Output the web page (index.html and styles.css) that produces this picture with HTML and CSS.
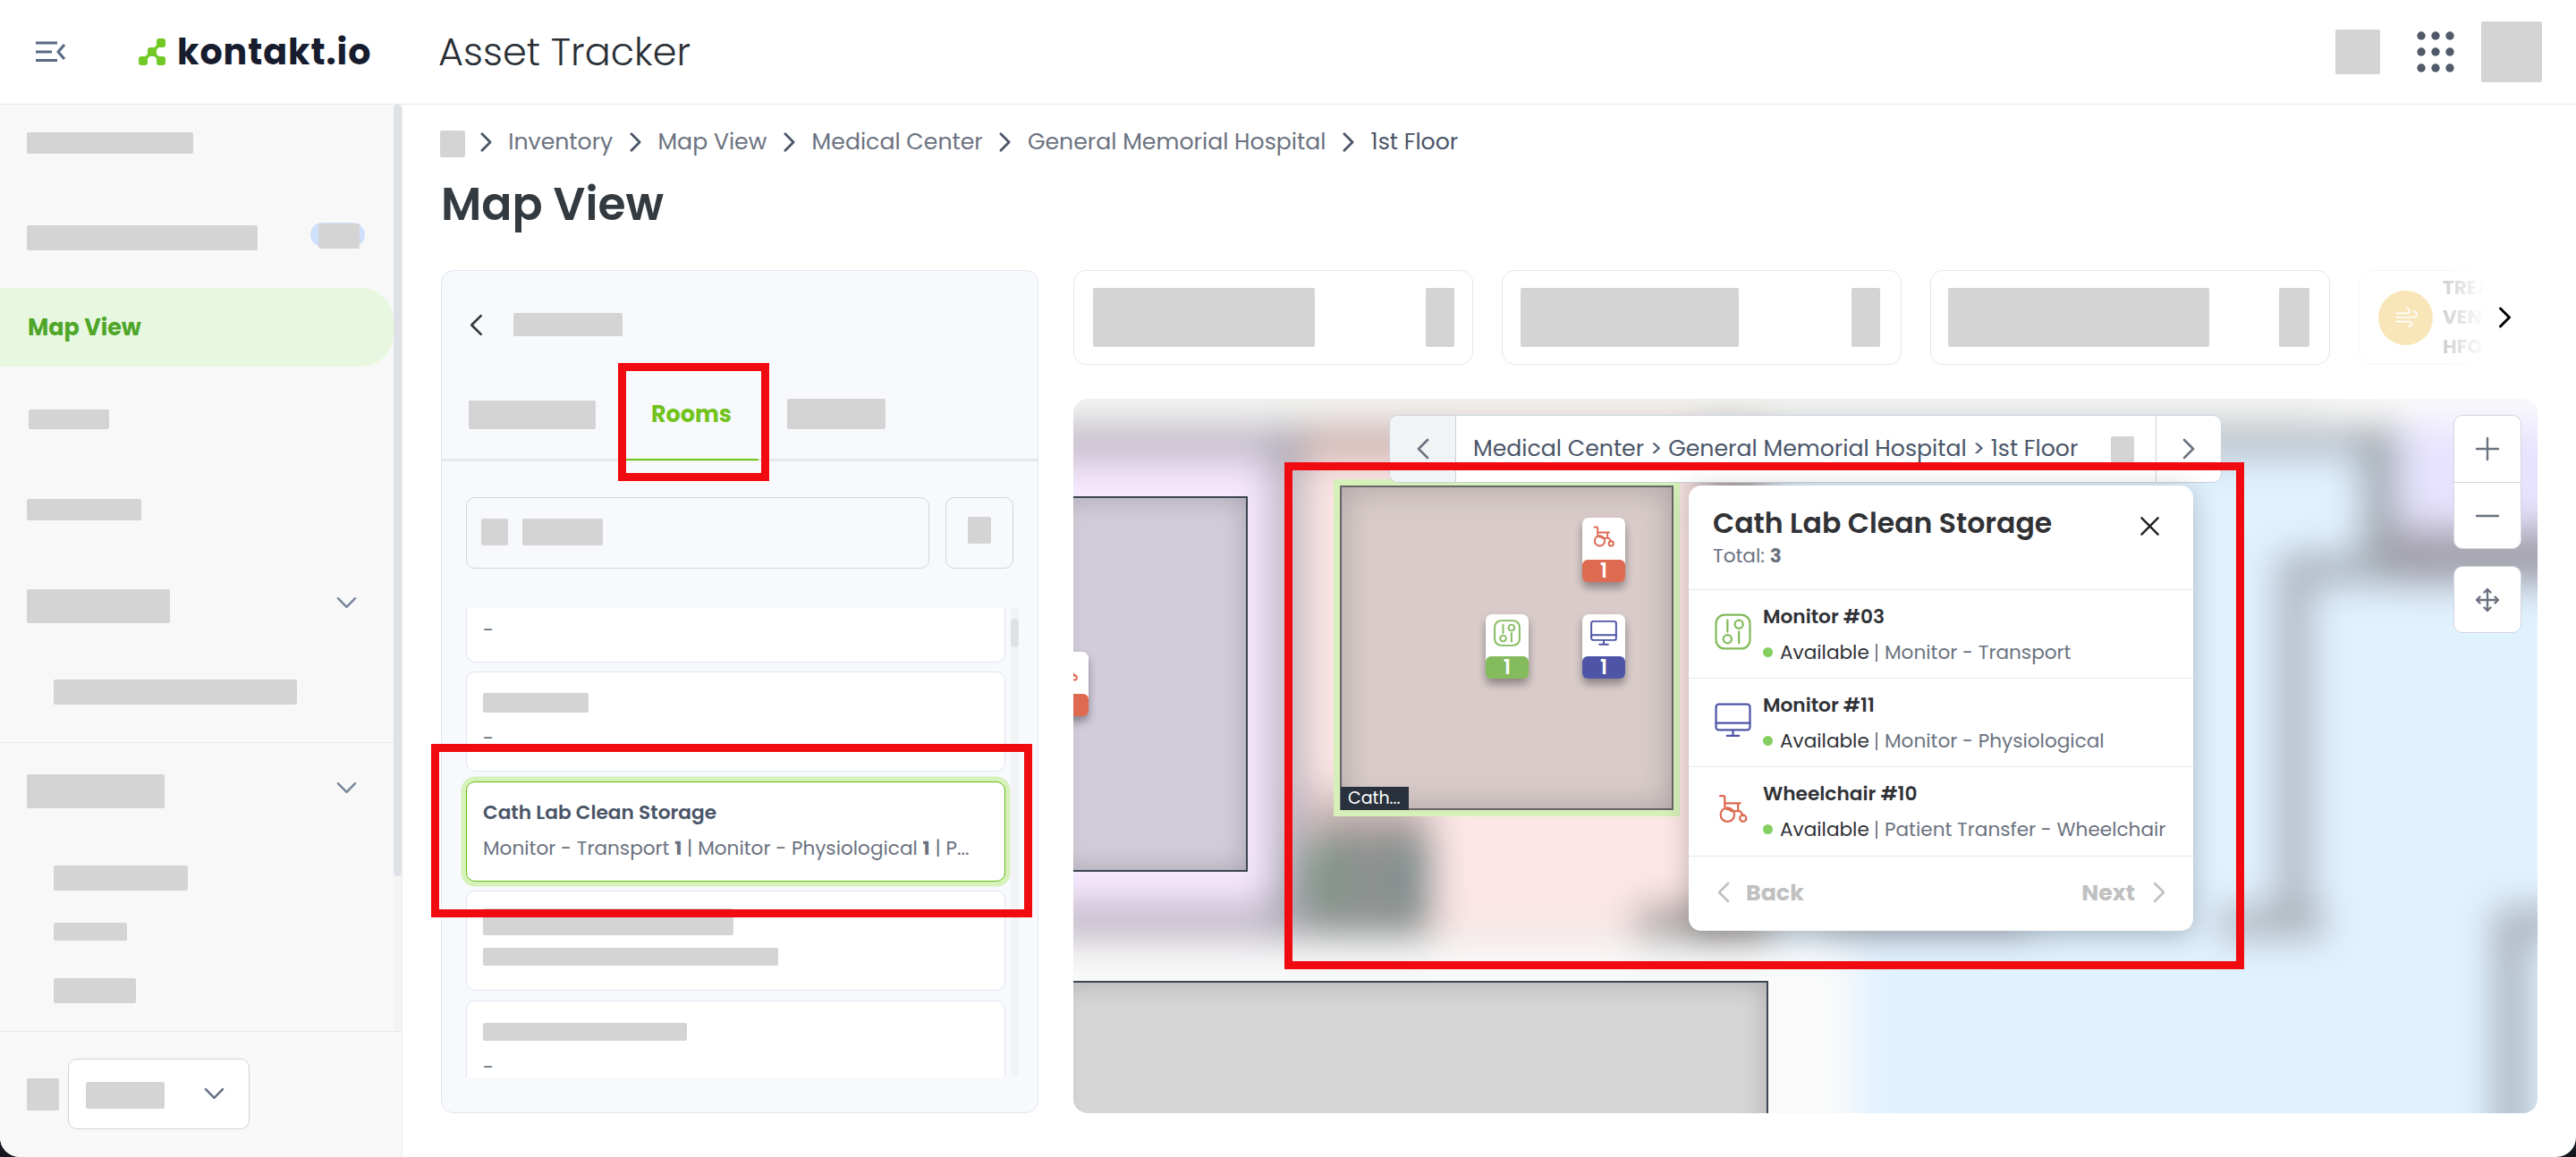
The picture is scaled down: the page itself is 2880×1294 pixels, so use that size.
FILE: index.html
```html
<!DOCTYPE html>
<html lang="en">
<head>
<meta charset="utf-8">
<title>Asset Tracker – Map View</title>
<link rel="stylesheet" href="styles.css">
</head>
<body>
<svg class="defs" width="0" height="0">
  <symbol id="chev-r" viewBox="0 0 14 24"><path d="M2 2l10 10L2 22"/></symbol>
  <symbol id="chev-l" viewBox="0 0 14 24"><path d="M12 2L2 12l10 10"/></symbol>
  <symbol id="chev-d" viewBox="0 0 24 14"><path d="M2 2l10 10L22 2"/></symbol>
  <symbol id="transport" viewBox="0 0 40 40"><rect x="1.5" y="1.5" width="37" height="37" rx="9.5"/><path d="M14 7.500V20M26.500 20v12.500"/><circle cx="26.500" cy="12" r="4.500"/><circle cx="14" cy="28" r="4.500"/></symbol>
  <symbol id="monitor" viewBox="0 0 40 40"><rect x="1.500" y="2.500" width="37" height="28" rx="3"/><path d="M1.500 23h37M20 30.500v6M13.500 37h13"/></symbol>
  <symbol id="wheelchair" viewBox="0 0 40 40"><path d="M6 6h3.500q1.500 0 1.500 2v10M11 14h17M25.500 14v8.500M13 20.500q2-1 5 2h9.500l4 5"/><circle cx="14" cy="26.500" r="7.500"/><circle cx="31" cy="30.500" r="3.500"/></symbol>
</svg>
<div class="app">
  <header class="header">
    <svg class="menu" viewBox="0 0 36 26"><path d="M1 3h24M1 13h18M1 22.500h24M33 5l-7 8 7 8"/></svg>
    <svg class="logo" viewBox="0 0 30 30"><path class="link" d="M24 6l-9 9M15 15l-10 10M15 15l10 10"/><rect x="20" y="0" width="10" height="10" rx="3"/><rect x="10" y="10" width="10" height="10" rx="3"/><rect x="0" y="20" width="10" height="10" rx="3"/><rect x="20" y="20" width="10" height="10" rx="3"/></svg>
    <span class="brand">kontakt.io</span>
    <span class="product">Asset Tracker</span>
    <div class="header-right">
      <i class="ph ph-tool"></i>
      <svg class="apps" viewBox="0 0 44 46"><circle cx="6" cy="5" r="4.700"/><circle cx="22" cy="5" r="4.700"/><circle cx="38" cy="5" r="4.700"/><circle cx="6" cy="23" r="4.700"/><circle cx="22" cy="23" r="4.700"/><circle cx="38" cy="23" r="4.700"/><circle cx="6" cy="41" r="4.700"/><circle cx="22" cy="41" r="4.700"/><circle cx="38" cy="41" r="4.700"/></svg>
      <i class="ph ph-user"></i>
    </div>
  </header>
  <div class="body">
    <aside class="sidebar">
      <div class="side-scroll">
        <nav class="nav">
          <div class="item"><i class="ph n1"></i></div>
          <div class="item"><i class="ph n2"></i><span class="pill"><i class="ph n2b"></i></span></div>
          <div class="item active"><span>Map View</span></div>
          <div class="item"><i class="ph n4"></i></div>
          <div class="item"><i class="ph n5"></i></div>
          <div class="item group"><i class="ph n6"></i><svg class="down"><use href="#chev-d"/></svg></div>
          <div class="sub s1"><i class="ph"></i></div>
          <div class="rule"></div>
          <div class="item group"><i class="ph n7"></i><svg class="down"><use href="#chev-d"/></svg></div>
          <div class="sub s2"><i class="ph"></i></div>
          <div class="sub s3"><i class="ph"></i></div>
          <div class="sub s4"><i class="ph"></i></div>
        </nav>
        <div class="side-track"><div class="side-thumb"></div></div>
      </div>
      <div class="side-foot"><i class="ph f1"></i><div class="select"><i class="ph f2"></i><svg class="down"><use href="#chev-d"/></svg></div></div>
    </aside>
    <main class="main">
      <div class="crumbs">
        <i class="ph home"></i><svg><use href="#chev-r"/></svg><span>Inventory</span><svg><use href="#chev-r"/></svg><span>Map View</span><svg><use href="#chev-r"/></svg><span>Medical Center</span><svg><use href="#chev-r"/></svg><span>General Memorial Hospital</span><svg><use href="#chev-r"/></svg><span class="current">1st Floor</span>
      </div>
      <h1 class="title">Map View</h1>
      <div class="content">
        <section class="panel">
          <div class="panel-head"><svg><use href="#chev-l"/></svg><i class="ph"></i></div>
          <div class="tabs"><i class="ph t1"></i><div class="tab"><span>Rooms</span></div><i class="ph t3"></i></div>
          <div class="search-row"><div class="search"><i class="ph q1"></i><i class="ph q2"></i></div><div class="filter"><i class="ph"></i></div></div>
          <div class="list">
            <div class="cards">
              <div class="card first"><div class="line">-</div></div>
              <div class="card"><div class="line"><i class="ph c1"></i></div><div class="line">-</div></div>
              <div class="card selected"><div class="line name"><span>Cath Lab Clean Storage</span></div><div class="line"><span>Monitor - Transport <b>1</b> | Monitor - Physiological <b>1</b> | P...</span></div></div>
              <div class="card"><div class="line"><i class="ph c2"></i></div><div class="line"><i class="ph c3"></i></div></div>
              <div class="card"><div class="line"><i class="ph c4"></i></div><div class="line">-</div></div>
            </div>
            <div class="list-track"><div class="list-thumb"></div></div>
          </div>
        </section>
        <section class="right">
          <div class="strip">
            <div class="stats">
              <div class="stat"><i class="ph a1"></i><i class="ph b1"></i></div>
              <div class="stat"><i class="ph a2"></i><i class="ph b1"></i></div>
              <div class="stat"><i class="ph a3"></i><i class="ph b3"></i></div>
              <div class="stat last"><span class="disc"><svg viewBox="0 0 28 24"><path d="M2 7h13q3 0 3-3t-3-3M2 12h21q4 0 4-3.500T23 5M2 17h16q3 0 3 3t-4 3"/></svg></span><span class="stat-label">TREA<br>VENT<br>HFO</span></div>
            </div>
            <svg class="more"><use href="#chev-r"/></svg>
          </div>
          <div class="map">
            <svg class="floor" viewBox="1200 446 1637 799">
              <defs><filter id="soft" filterUnits="userSpaceOnUse" x="1100" y="346" width="1837" height="999"><feGaussianBlur stdDeviation="21"/></filter></defs>
              <rect x="1200" y="446" width="1637" height="799" fill="#fafafa"/>
              <g filter="url(#soft)">
                <rect x="1000" y="300" width="2000" height="1100" fill="#fafafa"/>
                <rect x="1100" y="300" width="1500" height="180" fill="#f4f5f3"/>
                <rect x="1100" y="474" width="350" height="580" fill="#c0b7c6"/>
                <rect x="1100" y="518" width="322" height="490" fill="#f8eaff"/>
                <rect x="1422" y="475" width="36" height="575" fill="#a5a4b0"/>
                <rect x="1456" y="472" width="500" height="45" fill="#ceb3b0"/>
                <rect x="1456" y="517" width="554" height="535" fill="#fde6e6"/>
                <rect x="1456" y="960" width="40" height="92" fill="#a9a8a8"/>
                <rect x="1466" y="885" width="130" height="50" fill="#ccb8b7"/>
                <rect x="1464" y="925" width="138" height="127" fill="#8d9290"/>
                <rect x="1464" y="940" width="24" height="70" fill="#6d9476"/>
                <rect x="1578" y="940" width="24" height="80" fill="#648587"/>
                <rect x="1600" y="1035" width="230" height="22" fill="#f0e4e2"/>
                <rect x="1830" y="1012" width="210" height="42" fill="#a39e9d"/>
                <rect x="1900" y="475" width="80" height="80" fill="#8d8888"/>
                <rect x="1600" y="1060" width="480" height="200" fill="#fafafa"/>
                <rect x="1980" y="475" width="950" height="585" fill="#e1f2ff"/>
                <rect x="2074" y="1030" width="850" height="400" fill="#e1f2ff"/>
                <rect x="1980" y="474" width="690" height="38" fill="#b3bac4"/>
                <rect x="2040" y="1012" width="230" height="34" fill="#b9c5d0"/>
                <rect x="2685" y="474" width="260" height="116" fill="#e7e3ff"/>
                <rect x="2640" y="475" width="40" height="170" fill="#9da3a8"/>
                <rect x="2660" y="590" width="270" height="66" fill="#a19fa8"/>
                <rect x="2546" y="618" width="120" height="36" fill="#a3aab3"/>
                <rect x="2544" y="630" width="42" height="420" fill="#aeb4bf"/>
                <rect x="2480" y="1014" width="120" height="36" fill="#a9aeb4"/>
                <rect x="2790" y="1015" width="34" height="400" fill="#9ba2ab"/>
                <rect x="2786" y="1014" width="150" height="36" fill="#a9aeb6"/>
              </g>
            </svg>
            <div class="room room-left"></div>
            <div class="room room-bottom"></div>
            <div class="room room-cath"><span class="room-tag">Cath...</span></div>
            <div class="pin red p0"><svg><use href="#wheelchair"/></svg><b>1</b></div>
            <div class="pin red p1"><svg><use href="#wheelchair"/></svg><b>1</b></div>
            <div class="pin green p2"><svg><use href="#transport"/></svg><b>1</b></div>
            <div class="pin blue p3"><svg><use href="#monitor"/></svg><b>1</b></div>
            <div class="floor-nav"><div class="prev"><svg><use href="#chev-l"/></svg></div><div class="path"><span>Medical Center &gt; General Memorial Hospital &gt; 1st Floor</span><i class="ph"></i></div><div class="next"><svg><use href="#chev-r"/></svg></div></div>
            <div class="zoom">
              <div class="zoom-group"><div><svg viewBox="0 0 26 26"><path d="M1 13h24M13 1v24"/></svg></div><div><svg viewBox="0 0 26 26"><path d="M1 13h24"/></svg></div></div>
              <div class="zoom-fit"><svg viewBox="0 0 26 26"><path d="M1 13h24M13 1v24M9.500 4.500L13 1l3.500 3.500M9.500 21.500L13 25l3.500-3.500M4.500 9.500L1 13l3.500 3.500M21.500 9.500L25 13l-3.500 3.500"/></svg></div>
            </div>
            <div class="popup">
              <div class="pop-head"><div><div class="pop-title">Cath Lab Clean Storage</div><div class="pop-total">Total: <b>3</b></div></div><svg class="close" viewBox="0 0 22 22"><path d="M1.500 1.500l19 19M20.500 1.500l-19 19"/></svg></div>
              <div class="asset"><svg class="green"><use href="#transport"/></svg><div><div class="asset-name">Monitor #03</div><div class="asset-info"><i class="dot"></i><em>Available</em><s></s><span>Monitor - Transport</span></div></div></div>
              <div class="asset"><svg class="blue"><use href="#monitor"/></svg><div><div class="asset-name">Monitor #11</div><div class="asset-info"><i class="dot"></i><em>Available</em><s></s><span>Monitor - Physiological</span></div></div></div>
              <div class="asset"><svg class="red"><use href="#wheelchair"/></svg><div><div class="asset-name">Wheelchair #10</div><div class="asset-info"><i class="dot"></i><em>Available</em><s></s><span>Patient Transfer - Wheelchair</span></div></div></div>
              <div class="pop-foot"><svg><use href="#chev-l"/></svg><span>Back</span><span class="nextlab">Next</span><svg><use href="#chev-r"/></svg></div>
            </div>
          </div>
        </section>
      </div>
    </main>
  </div>
  <div class="mark mark-tab"></div>
  <div class="mark mark-card"></div>
  <div class="mark mark-map"></div>
</div>
</body>
</html>
```
FILE: styles.css
```css
*{box-sizing:border-box}
body{margin:0;width:2880px;height:1294px;background:#15191d;font-family:Poppins,Inter,"Open Sans",sans-serif;color:#4a5568;overflow:hidden}
.defs{position:absolute}
svg{fill:none;stroke:currentColor;stroke-width:2.6;stroke-linecap:round;stroke-linejoin:round;flex:none;overflow:visible}
i,em,s{font-style:normal;text-decoration:none}
.ph{display:block;flex:none;background:#d4d4d4;border-radius:2px}
.app{position:relative;width:2880px;height:1294px;background:#fff;border-radius:0 0 22px 22px;overflow:hidden;display:flex;flex-direction:column}

.header{height:117px;flex:none;border-bottom:1px solid #e4e9f2;display:flex;align-items:center;padding-left:39px;padding-right:38px}
.menu{width:36px;height:26px;color:#5a6a85;stroke-width:3.2;stroke-linecap:butt}
.logo{width:30px;height:30px;margin-left:80px;stroke:none;fill:#72c926}
.logo .link{stroke:#72c926;stroke-width:3.5}
.brand{width:292px;margin-left:13px;font-size:39.6px;letter-spacing:.95px;font-weight:700;color:#171c2e;white-space:nowrap}
.product{font-size:43px;font-weight:300;color:#2a2f36;white-space:nowrap}
.header-right{margin-left:auto;display:flex;align-items:center}
.ph-tool{width:50px;height:50px}
.apps{width:44px;height:46px;margin:0 29px 0 40px;stroke:none;fill:#515a68}
.ph-user{width:68px;height:68px}

.body{flex:1;display:flex;min-height:0}
.sidebar{width:450px;flex:none;background:#f8f8f8;border-right:1px solid #eaebed;display:flex;flex-direction:column}
.side-scroll{height:1036px;display:flex}
.nav{width:440px;display:flex;flex-direction:column}
.side-track{width:9px;background:#f4f4f4;border-radius:5px}
.side-thumb{height:863px;background:#dee2e7;border-radius:5px}
.item{height:88px;flex:none;margin-bottom:14.5px;padding-left:30px;display:flex;align-items:center;border-radius:0 36px 36px 0}
.item.active{background:#e8f8e0;color:#4fa62a;font-size:25.4px;font-weight:700;padding-left:31px;padding-top:1px}
.group{height:97px;margin-bottom:0;padding-right:41px;justify-content:space-between}
.down{width:23px;height:14px;color:#78859a;margin-bottom:9px}
.n1{width:186px;height:24px;margin-bottom:2px}
.n2{width:258px;height:28px;margin-top:4px}
.pill{width:61px;height:27px;margin:-2px 0 0 59px;border-radius:14px;background:#cfe0fc;padding:1px 0 0 9px}
.n2b{width:46px;height:28px}
.n4{width:90px;height:22px;margin-left:2px}
.n5{width:128px;height:24px;margin-bottom:2px}
.n6{width:160px;height:38px}
.n7{width:154px;height:38px}
.sub{padding-left:60px}
.s1{padding-top:33px}.s1 .ph{width:272px;height:28px}
.rule{height:1px;margin:42px 0 6px;background:#e6e9f0;flex:none}
.s2{padding-top:34px}.s2 .ph{width:150px;height:28px}
.s3{padding-top:36px}.s3 .ph{width:82px;height:20px}
.s4{padding-top:42px}.s4 .ph{width:92px;height:28px}
.side-foot{flex:1;border-top:1px solid #e8e9eb;display:flex;padding:30px 0 0 30px}
.f1{width:36px;height:36px;margin-top:22px}
.select{width:203px;height:79px;margin-left:10px;border:1px solid #cfd3dc;border-radius:10px;background:#fff;display:flex;align-items:center;justify-content:space-between;padding:0 27px 0 19px}
.f2{width:88px;height:30px;margin-top:3px}
.select .down{color:#667085;margin:0 0 1px}

.main{flex:1;padding:29px 43px 49px 42px;display:flex;flex-direction:column}
.crumbs{height:25px;display:flex;align-items:center;font-size:25.2px;color:#6b7280;white-space:nowrap;line-height:25px}
.crumbs svg{width:13px;height:22px;margin:0 18.6px;color:#4a5568;stroke-width:3}
.crumbs .home{width:28px;height:30px;align-self:flex-start;margin-right:-2px}
.crumbs .current{color:#4a5568}
.title{margin:28px 0 43px 1px;height:60px;line-height:60px;font-size:50.4px;font-weight:600;color:#333a40;align-self:flex-start;white-space:nowrap}
.content{flex:1;display:flex;gap:39px;margin-left:1px;min-height:0}

.panel{width:668px;border:1px solid #e0e7ef;border-radius:14px;background:#f8f9fd;display:flex;flex-direction:column}
.panel-head{height:107px;padding:13px 0 0 31px;display:flex;align-items:center;gap:34px}
.panel-head svg{width:15px;height:25px;color:#333a40}
.panel-head .ph{width:122px;height:26px}
.tabs{height:106px;border-bottom:3px solid #e5e8ec;padding-left:30px;display:flex;align-items:center}
.tab{width:150px;height:103px;margin:0 31px 0 33px;padding-top:2px;text-align:center;line-height:99px;font-size:25.4px;font-weight:700;color:#72c31c;border-bottom:2px solid #72c31c;position:relative;top:2px;left:-1px}
.t1{width:142px;height:32px;margin-top:5px}
.t3{width:110px;height:34px;margin-top:3px}
.search-row{display:flex;gap:18px;margin:40px 0 44px 27px}
.search{width:518px;height:80px;border:1px solid #d1d5dd;border-radius:10px;display:flex;align-items:center;padding:0 0 3px 16px;gap:16px}
.q1{width:30px;height:30px}.q2{width:90px;height:30px}
.filter{width:76px;height:80px;border:1px solid #d1d5dd;border-radius:10px;display:flex;align-items:center;justify-content:center;padding-bottom:6px}
.filter .ph{width:26px;height:30px}
.list{height:525px;margin-left:21px;display:flex;overflow:hidden}
.cards{width:615px;padding:0 6px;display:flex;flex-direction:column;gap:10.4px}
.card{height:112px;flex:none;border:1px solid #dfe6ee;border-radius:10px;background:#fff;padding:19px 18px 0;display:flex;flex-direction:column;gap:10px;font-size:21.6px;color:#6b7280;white-space:nowrap}
.card.first{height:61px;border-top:0;border-radius:0 0 10px 10px;padding-top:10px}
.card.selected{border-color:#66ba12;box-shadow:0 0 0 5.5px #d6f1ba}
.line{height:30px;line-height:30px;display:flex;align-items:center}
.line span{white-space:pre}
.name{font-weight:600;color:#4a5568;font-size:21.7px}
.c1{width:118px;height:22px}.c2{width:280px;height:30px}.c3{width:330px;height:20px;margin-bottom:3px}.c4{width:228px;height:20px}
.list-track{width:9px;background:#f2f3f5;border-radius:5px;padding-top:12px}
.list-thumb{height:32px;border-radius:5px;background:#dfe1e6}

.right{width:1637px;display:flex;flex-direction:column;gap:38px}
.strip{height:106px;display:flex;align-items:center}
.stats{width:1580px;height:106px;display:flex;gap:32px;overflow:hidden}
.stat{width:447px;height:106px;flex:none;border:1px solid #dfe8f0;border-radius:14px;padding:0 20px 0 21px;display:flex;align-items:center;justify-content:space-between}
.stat:nth-child(2){padding:0 23px 0 20px}
.stat:nth-child(3){padding:0 22px 0 19px}
.a1,.a2,.a3,.b1,.b3{height:66px}
.a1{width:248px}.a2{width:244px}.a3{width:292px}.b1{width:32px}.b3{width:34px}
.stat.last{justify-content:flex-start;padding-left:21px;opacity:.4;-webkit-mask-image:linear-gradient(90deg,#000 94px,transparent 142px);mask-image:linear-gradient(90deg,#000 94px,transparent 142px)}
.disc{width:61px;height:61px;border-radius:50%;background:#f0c24f;color:#fff;display:flex;align-items:center;justify-content:center;flex:none}
.disc svg{width:26px;height:22px;stroke-width:1.8}
.stat-label{margin-left:11px;font-size:21.6px;line-height:33px;font-weight:700;color:#85898f;padding-bottom:2px}
.more{width:15px;height:24px;margin-left:13px;color:#000;stroke-width:3}

.map{position:relative;flex:1;border-radius:16px;overflow:hidden}
.floor{position:absolute;inset:0;width:1637px;height:799px;stroke:none}
.room{position:absolute;border:2px solid #3d4452;background:#d2cbd9;box-shadow:inset 0 0 30px rgba(0,0,0,.2)}
.room-left{left:-20px;top:109px;width:215px;height:420px}
.room-bottom{left:-20px;top:651px;width:797px;height:200px;background:#d6d6d6}
.room-cath{left:298px;top:97px;width:373px;height:363px;background:#d8cbca;border-color:#666;box-shadow:0 0 0 7px #d6f0ba,inset 0 0 36px rgba(0,0,0,.2)}
.room-tag{position:absolute;left:-1px;bottom:-2px;width:76px;height:26px;background:#29313c;color:#fff;font-size:19px;line-height:26px;padding-left:8px;white-space:nowrap}
.pin{position:absolute;width:48px;height:72px;border-radius:7px;background:#fff;box-shadow:0 6px 10px rgba(0,0,0,.35);display:flex;flex-direction:column;align-items:center}
.pin svg{width:30px;height:30px;margin:6px 0 11px}
.pin b{width:48px;height:25px;border-radius:6px;text-align:center;font-size:22px;line-height:25px;font-weight:600;color:#fff}
.red{color:#de6a52}.red b{background:#de6a52}
.green{color:#84bb5d}.green b{background:#84bb5d}
.blue{color:#4e55a7}.blue b{background:#4e55a7}
.p0{left:-31px;top:283px}.p1{left:569px;top:133px}.p2{left:461px;top:241px}.p3{left:569px;top:241px}
.floor-nav{position:absolute;left:353px;top:18px;width:931px;height:76px;border:1px solid #cbd2dc;border-radius:10px;background:#fff;display:flex;overflow:hidden;color:#6b7280}
.floor-nav svg{width:14px;height:24px}
.prev{width:74px;background:#f2f3f5;border-right:1px solid #cbd2dc;display:flex;align-items:center;justify-content:center}
.path{flex:1;padding-left:19px;display:flex;align-items:center;font-size:25.2px;color:#4a5568;white-space:nowrap}
.path span{width:677px}
.path .ph{width:26px;height:30px;margin:2px 0 0 36px}
.next{width:73px;border-left:1px solid #cbd2dc;display:flex;align-items:center;justify-content:center}
.zoom{position:absolute;left:1543px;top:18px;width:76px;display:flex;flex-direction:column;gap:19px;color:#6b7280}
.zoom-group,.zoom-fit{border:1px solid #d1d5dd;border-radius:10px;background:#fff}
.zoom-group div{height:74px;display:flex;align-items:center;justify-content:center}
.zoom-fit{height:75px;display:flex;align-items:center;justify-content:center}
.zoom-group div+div{border-top:1px solid #d1d5dd}
.zoom svg{width:26px;height:26px;stroke-width:2.4}
.popup{position:absolute;left:688px;top:97px;width:564px;height:498px;background:#fff;border-radius:14px;box-shadow:0 6px 30px rgba(0,0,0,.25);display:flex;flex-direction:column;white-space:nowrap;color:#6b7280}
.pop-head{height:116px;padding:22px 38px 0 27px;display:flex;justify-content:space-between;flex:none}
.pop-title{height:40px;line-height:40px;font-size:31.5px;font-weight:600;color:#303236}
.pop-total{height:30px;line-height:33px;font-size:21.6px}
.close{width:21px;height:21px;margin-top:13px;color:#222;stroke-width:2.6}
.asset{height:99.200px;flex:none;border-top:1px solid #e2e8f0;padding:15px 0 0 29px;display:flex;gap:13px}
.asset svg{width:41px;height:41px;margin-top:11px;stroke-width:2.2}
.asset-name{height:30px;line-height:30px;font-size:21.700px;font-weight:600;color:#303236}
.asset-info{height:30px;line-height:30px;margin-top:10px;font-size:21.600px;display:flex;align-items:center}
.dot{width:11px;height:11px;border-radius:50%;background:#84cf5f;margin:0 8px 2px 0}
.asset-info em{color:#303236;width:107px}
.asset-info s{width:2px;height:20px;background:#7b828e;margin-right:8px}
.pop-foot{flex:1;border-top:1px solid #e2e8f0;padding:0 31px 2px 32px;display:flex;align-items:center;font-size:25.3px;font-weight:700;color:#c0c0c0}
.pop-foot svg{width:14px;height:24px}
.pop-foot span{margin-left:18px}
.pop-foot .nextlab{margin:0 20px 0 auto}

.mark{position:absolute;border:9px solid #f00b10}
.mark-tab{left:691px;top:406px;width:169px;height:132px}
.mark-card{left:482px;top:832px;width:672px;height:194px}
.mark-map{left:1436px;top:517px;width:1073px;height:567px}
```
